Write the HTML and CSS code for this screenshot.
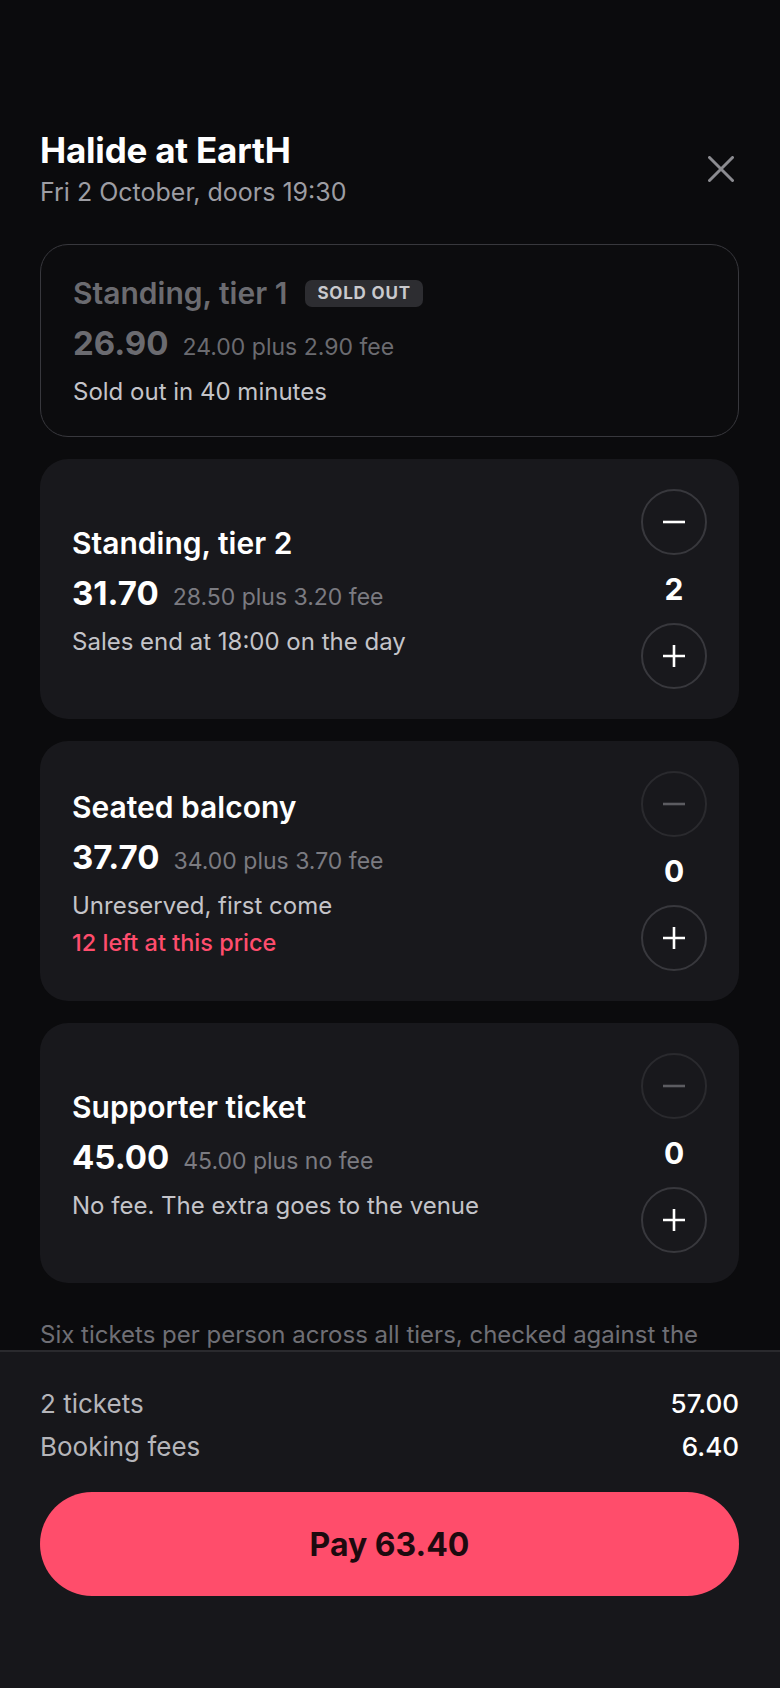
FILE: index.html
```html
<!DOCTYPE html>
<html lang="en">
<head>
    <meta charset="UTF-8">
    <meta name="viewport" content="width=device-width, initial-scale=1.0">
    <title>Tickets - Halide at EartH</title>
    <link rel="stylesheet" href="styles.css">
</head>
<body>
    <div class="sheet">
        <div class="content">
            <div class="header">
                <div>
                    <h1 class="event-title">Halide at EartH</h1>
                    <div class="event-date">Fri 2 October, doors 19:30</div>
                </div>
                <button class="close" aria-label="Close">
                    <svg width="26" height="26" viewBox="0 0 26 26"><path d="M1.5 1.5 L24.5 24.5 M24.5 1.5 L1.5 24.5" stroke="#8b8b90" stroke-width="3" stroke-linecap="round"/></svg>
                </button>
            </div>

            <div class="tier sold-out">
                <div class="tier-info">
                    <div class="tier-name">Standing, tier 1 <span class="badge">SOLD OUT</span></div>
                    <div class="price-row"><span class="price">26.90</span><span class="fee">24.00 plus 2.90 fee</span></div>
                    <div class="tier-note">Sold out in 40 minutes</div>
                </div>
            </div>

            <div class="tier">
                <div class="tier-info">
                    <div class="tier-name">Standing, tier 2</div>
                    <div class="price-row"><span class="price">31.70</span><span class="fee">28.50 plus 3.20 fee</span></div>
                    <div class="tier-note">Sales end at 18:00 on the day</div>
                </div>
                <div class="stepper">
                    <button class="step"><svg width="24" height="24" viewBox="0 0 24 24"><path d="M1 12 H23" stroke="#fff" stroke-width="2.6"/></svg></button>
                    <div class="count">2</div>
                    <button class="step"><svg width="24" height="24" viewBox="0 0 24 24"><path d="M1 12 H23 M12 1 V23" stroke="#fff" stroke-width="2.6"/></svg></button>
                </div>
            </div>

            <div class="tier">
                <div class="tier-info">
                    <div class="tier-name">Seated balcony</div>
                    <div class="price-row"><span class="price">37.70</span><span class="fee">34.00 plus 3.70 fee</span></div>
                    <div class="tier-note">Unreserved, first come</div>
                    <div class="tier-warn">12 left at this price</div>
                </div>
                <div class="stepper">
                    <button class="step disabled"><svg width="24" height="24" viewBox="0 0 24 24"><path d="M1 12 H23" stroke="#5c5c61" stroke-width="2.6"/></svg></button>
                    <div class="count">0</div>
                    <button class="step"><svg width="24" height="24" viewBox="0 0 24 24"><path d="M1 12 H23 M12 1 V23" stroke="#fff" stroke-width="2.6"/></svg></button>
                </div>
            </div>

            <div class="tier">
                <div class="tier-info">
                    <div class="tier-name">Supporter ticket</div>
                    <div class="price-row"><span class="price">45.00</span><span class="fee">45.00 plus no fee</span></div>
                    <div class="tier-note">No fee. The extra goes to the venue</div>
                </div>
                <div class="stepper">
                    <button class="step disabled"><svg width="24" height="24" viewBox="0 0 24 24"><path d="M1 12 H23" stroke="#5c5c61" stroke-width="2.6"/></svg></button>
                    <div class="count">0</div>
                    <button class="step"><svg width="24" height="24" viewBox="0 0 24 24"><path d="M1 12 H23 M12 1 V23" stroke="#fff" stroke-width="2.6"/></svg></button>
                </div>
            </div>

            <p class="limit-note">Six tickets per person across all tiers, checked against the name on the booking at the door.</p>
        </div>

        <div class="footer">
            <div class="sum-row"><span>2 tickets</span><span class="sum-value">57.00</span></div>
            <div class="sum-row"><span>Booking fees</span><span class="sum-value">6.40</span></div>
            <button class="pay">Pay 63.40</button>
        </div>
    </div>
</body>
</html>
```

FILE: styles.css
```css
body { margin: 0; background: #0b0b0d; font-family: Inter, "Noto Sans", sans-serif; color: #fff; }
button { font-family: inherit; border: none; background: none; padding: 0; cursor: pointer; }

.sheet { height: 100vh; display: flex; flex-direction: column; }
.content { flex: 1; overflow: hidden; padding: 130px 41px 0 40px; }

.header { display: flex; justify-content: space-between; align-items: center; margin-bottom: 36px; }
.event-title { margin: 0; font-size: 35px; line-height: 40px; font-weight: 700; letter-spacing: -0.2px; }
.event-date { margin-top: 7px; font-size: 25px; line-height: 31px; color: #9d9da3; }
.close { width: 26px; height: 26px; margin-right: 5px; display: flex; }

.tier { display: flex; align-items: center; justify-content: space-between; background: #18181c; border-radius: 28px; padding: 30px 32px; margin-bottom: 22px; }
.tier.sold-out { background: #0c0c0e; border: 1.5px solid #38383d; padding: 26px 32px 29px; }
.tier-name { font-size: 30px; line-height: 44px; font-weight: 600; display: flex; align-items: center; gap: 18px; }
.price-row { margin-top: 8px; line-height: 40px; display: flex; align-items: baseline; gap: 14px; }
.price { font-size: 33px; font-weight: 700; }
.fee { font-size: 23px; color: #7b7b81; }
.tier-note { margin-top: 9px; font-size: 24px; line-height: 31px; color: #c4c4c9; }
.tier-warn { margin-top: 6px; font-size: 23.5px; line-height: 31px; font-weight: 500; color: #ff4d6d; }

.sold-out .tier-name, .sold-out .price { color: #6b6b70; }
.sold-out .fee { color: #6b6b70; }
.badge { font-size: 17px; line-height: 27px; font-weight: 700; letter-spacing: 0.8px; color: #c9c9cd; background: #2d2d31; border-radius: 7px; padding: 0 12px; }

.stepper { display: flex; flex-direction: column; align-items: center; width: 66px; }
.step { width: 66px; height: 66px; border-radius: 50%; border: 2px solid #38383d; display: flex; align-items: center; justify-content: center; box-sizing: border-box; }
.step.disabled { border-color: #2a2a2e; }
.count { margin: 17px 0 16px; font-size: 30px; line-height: 35px; font-weight: 700; }

.limit-note { margin: 35px 0 0; font-size: 24px; line-height: 33px; color: #6f6f75; }

.footer { background: #17171b; border-top: 2px solid #2a2a2e; padding: 30px 41px 92px 40px; }
.sum-row { display: flex; justify-content: space-between; font-size: 26px; line-height: 43px; color: #b5b5ba; }
.sum-value { color: #fff; font-weight: 500; }
.pay { margin-top: 24px; width: 100%; height: 104px; border-radius: 52px; background: #ff4d6b; color: #1d0a0f; font-size: 32px; font-weight: 700; }
```
